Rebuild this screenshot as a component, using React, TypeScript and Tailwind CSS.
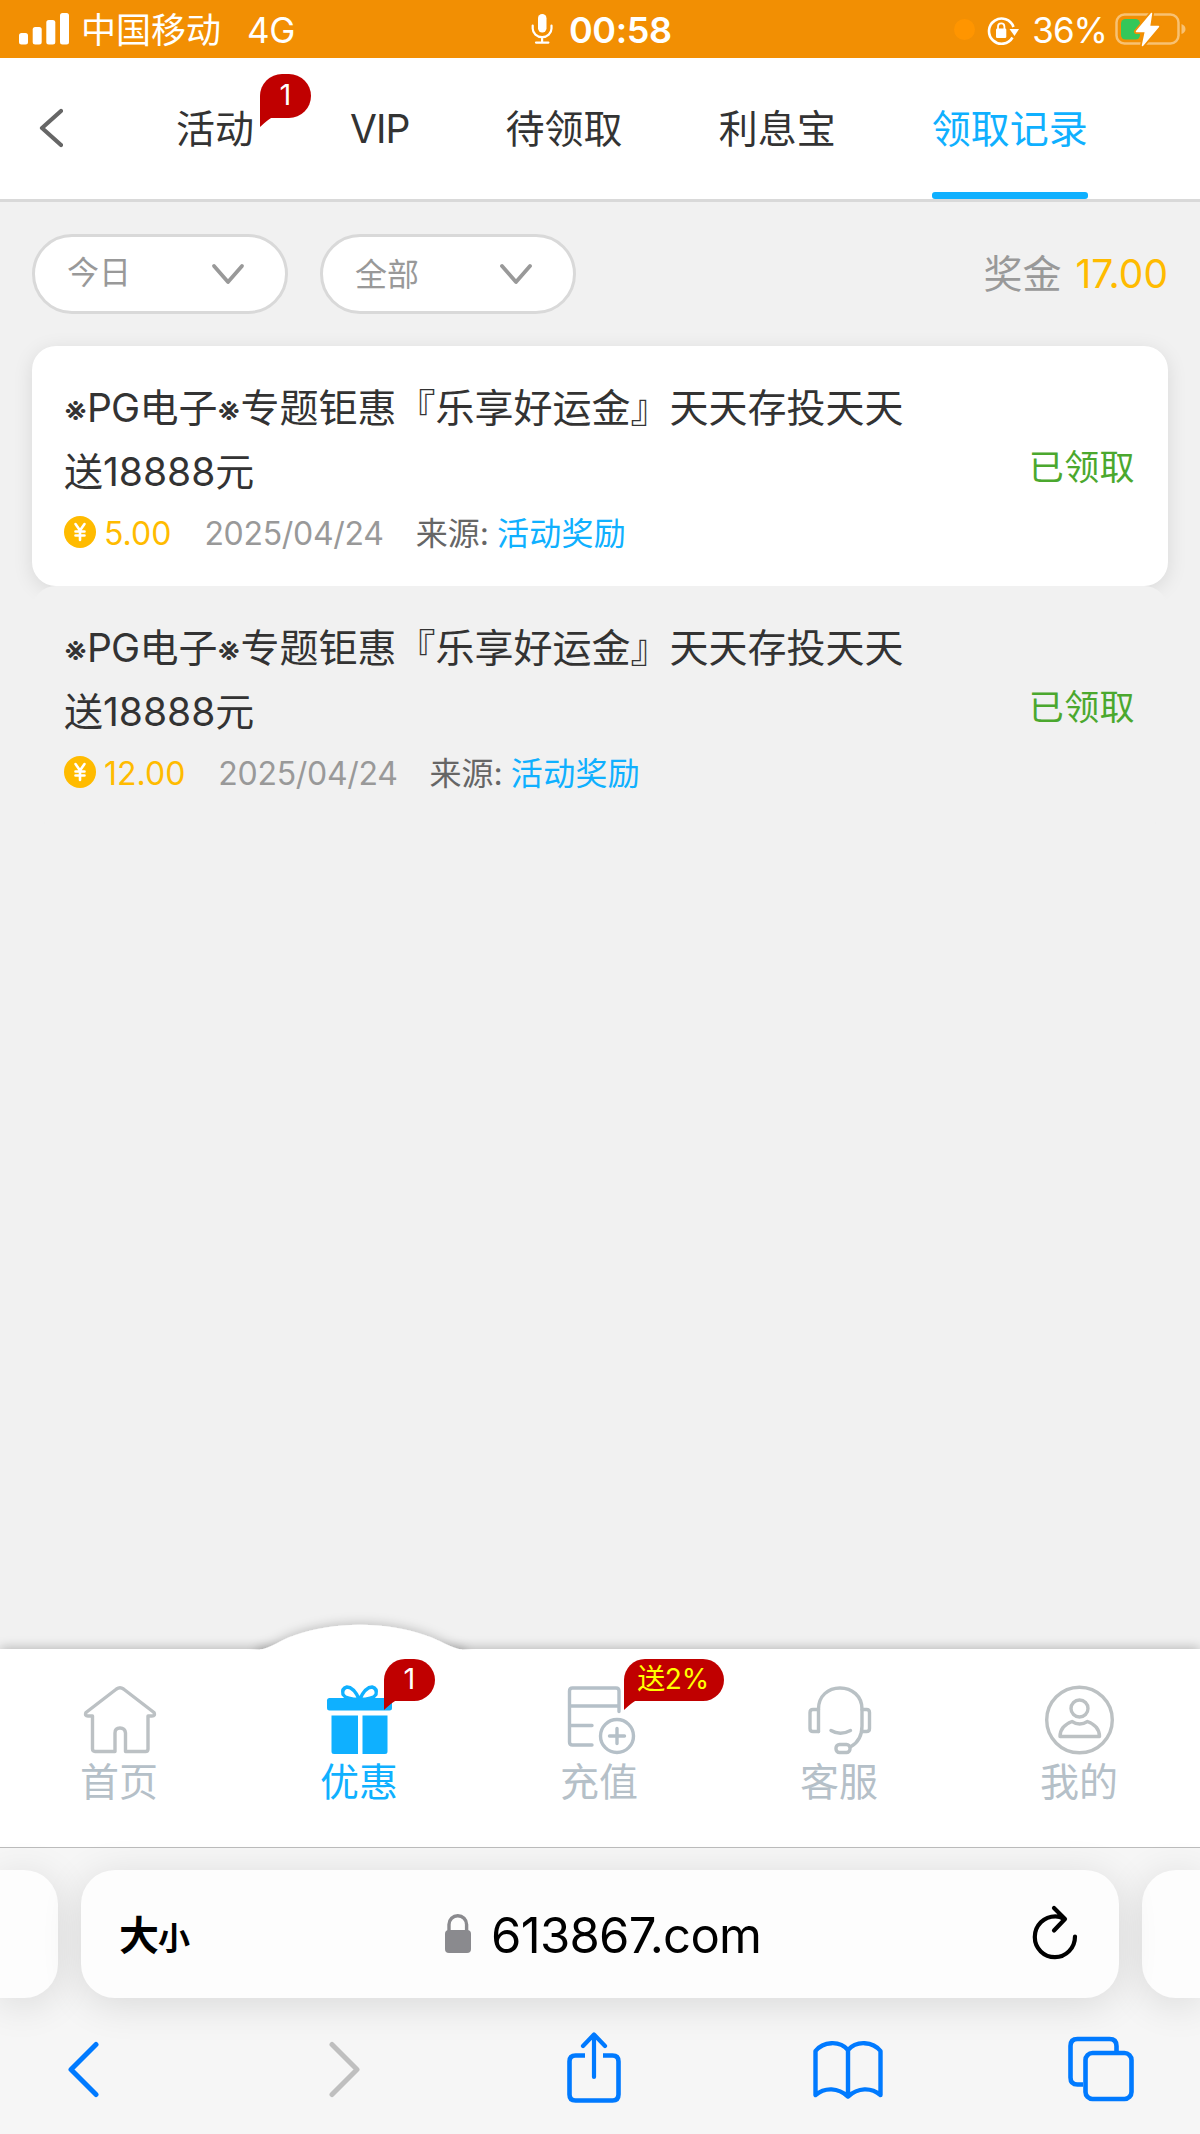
import type { ReactNode } from "react";

const tabs = [
  { label: "活动", badge: "1" },
  { label: "VIP" },
  { label: "待领取" },
  { label: "利息宝" },
  { label: "领取记录", active: true },
];

const filters = [
  { label: "今日", offset: "pb-0.5" },
  { label: "全部", offset: "pt-0.5" },
];

const records = [
  { id: 1, amount: "5.00", date: "2025/04/24", source: "活动奖励", status: "已领取" },
  { id: 2, amount: "12.00", date: "2025/04/24", source: "活动奖励", status: "已领取" },
];

function Badge({ children, className }: { children: ReactNode; className: string }) {
  return (
    <span
      className={`absolute flex items-center justify-center rounded-[22px] rounded-bl-none bg-[#c00000] leading-none ${className}`}
    >
      {children}
      <svg className="absolute left-0 top-full -mt-px" width="13" height="10" viewBox="0 0 13 10">
        <path d="M0 0H13Q9 1.5 0 10Z" fill="#c00000" />
      </svg>
    </span>
  );
}

function StatusBar() {
  return (
    <div className="relative flex h-[58px] items-center justify-between bg-[#f28f03] pl-[19px] pr-[14px] text-[35px] leading-none text-white">
      <div className="flex items-center">
        <svg width="50" height="32" viewBox="0 0 50 32" fill="#fff">
          <rect x="0" y="20" width="9" height="11.5" rx="2.5" />
          <rect x="13.7" y="14" width="9" height="17.5" rx="2.5" />
          <rect x="27.3" y="7" width="9" height="24.5" rx="2.5" />
          <rect x="41" y="0" width="9" height="31.5" rx="2.5" />
        </svg>
        <span className="ml-3 mt-0.5">中国移动</span>
        <span className="ml-[26px] mt-0.5 tracking-[-0.5px]">4G</span>
      </div>

      <div className="absolute left-[531px] top-0 flex h-[58px] items-center">
        <svg width="22" height="32" viewBox="0 0 22 32" fill="none" stroke="#fff" strokeWidth="2.2" strokeLinecap="round">
          <rect x="7" y="1" width="8.5" height="18.5" rx="4.2" fill="#fff" stroke="none" />
          <path d="M1.7 12.5V15.5a9.4 8.6 0 0 0 18.8 0V12.5M11.1 24V29M5 29.6H17.4" />
        </svg>
        <span className="ml-4 mt-0.5 text-[36px] font-semibold tracking-[-0.4px]">00:58</span>
      </div>

      <div className="flex items-center">
        <span className="mr-3 size-[21px] rounded-full bg-[#ff9500]" />
        <svg className="mt-1" width="32" height="30" viewBox="0 0 32 30" fill="none" stroke="#fff" strokeWidth="2.6">
          <path d="M25.5 21.5A12.6 12.6 0 1 1 26.5 11" />
          <path d="M22.5 13H32L27.500 20Z" fill="#fff" stroke="none" />
          <path d="M11 13V10.5a3.200 3.200 0 0 1 6.400 0V13" strokeWidth="1.8" />
          <rect x="9" y="12.5" width="10.3" height="9.500" rx="1.2" fill="#fff" stroke="none" />
        </svg>
        <span className="ml-[13px] mt-0.5 tracking-[-1px]">36%</span>
        <svg className="ml-2" width="71" height="36" viewBox="0 0 71 36">
          <rect x="1.5" y="3.5" width="62" height="29" rx="8" fill="none" stroke="#f8c172" strokeWidth="2.5" />
          <path d="M66.5 13q4 1.5 4 5t-4 5Z" fill="#f8c172" />
          <rect x="6" y="8" width="19" height="20.5" rx="4.5" fill="#34c759" />
          <path d="M36.5 2.5L21.5 20.5H30.5L27.5 34.5L43.5 15.5H34.5Z" fill="#fff" stroke="#f28f03" strokeWidth="5" strokeLinejoin="round" />
          <path d="M36.5 2.5L21.5 20.5H30.5L27.5 34.5L43.5 15.5H34.5Z" fill="#fff" stroke="#fff" strokeWidth="1.5" strokeLinejoin="round" />
        </svg>
      </div>
    </div>
  );
}

function TopTabs() {
  return (
    <nav className="flex h-[144px] items-stretch border-b-[3px] border-[#d9d9d9] bg-white pl-[38px]">
      <svg className="mt-[50px]" width="25" height="40" viewBox="0 0 25 40" fill="none" stroke="#666" strokeWidth="4.2" strokeLinecap="round" strokeLinejoin="round">
        <path d="M23 3L4 20L23 37" />
      </svg>
      <div className="ml-[113px] flex gap-[96px] text-[39px] leading-[141px]">
        {tabs.map((tab) => (
          <div
            key={tab.label}
            className={`relative whitespace-nowrap ${tab.active ? "text-[#0fb0ff]" : "text-[#333]"} ${
              tab.label === "VIP" ? "tracking-[-0.9px]" : ""
            }`}
          >
            {tab.label}
            {tab.badge && <Badge className="left-[84px] top-4 h-11 w-[51px] pb-1 text-[29px] text-white">{tab.badge}</Badge>}
            {tab.active && <span className="absolute inset-x-0 bottom-0 h-[7px] rounded-[3px] bg-[#0fb0ff]" />}
          </div>
        ))}
      </div>
    </nav>
  );
}

function FilterBar() {
  return (
    <div className="flex h-[144px] items-center gap-8 px-8">
      {filters.map((filter) => (
        <button
          key={filter.label}
          className="flex h-20 w-64 items-center justify-between rounded-full border-[3px] border-[#d9d9d9] bg-white pl-8 pr-10 text-[32px] leading-none text-[#999]"
        >
          <span className={filter.offset}>{filter.label}</span>
          <svg width="34" height="22" viewBox="0 0 34 22" fill="none" stroke="#999" strokeWidth="3.8" strokeLinecap="round" strokeLinejoin="round">
            <path d="M3 3L17 19L31 3" />
          </svg>
        </button>
      ))}
      <div className="ml-auto pb-0.5 text-[39px] leading-none text-[#999]">
        奖金<span className="ml-[14px] text-[#ffbb00]">17.00</span>
      </div>
    </div>
  );
}

function Star() {
  return (
    <span className="inline-flex w-[23px] justify-center text-[34px] font-medium leading-none">
      <span className="shrink-0">※</span>
    </span>
  );
}

function CoinIcon() {
  return (
    <svg className="-mt-1" width="32" height="32" viewBox="0 0 32 32">
      <circle cx="16" cy="16" r="16" fill="#ffbb00" />
      <path d="M11.5 8L16 14.5L20.5 8M16 14.5V24M11.5 15.500H20.500M11.500 19.500H20.500" fill="none" stroke="#fff" strokeWidth="2.6" strokeLinecap="round" />
    </svg>
  );
}

function RecordList() {
  return (
    <ul>
      {records.map((record, index) => (
        <li
          key={record.id}
          className={`relative mx-8 flex h-60 items-center justify-between rounded-[24px] px-8 ${
            index % 2 === 0 ? "bg-white shadow-[0_4px_20px_rgba(0,0,0,0.1)]" : "bg-[#f1f1f1]"
          }`}
        >
          <div className="pt-2">
            <p className="w-[870px] text-[39px] leading-[64px] text-[#333]">
              <Star />
              <span className="tracking-[-0.8px]">PG</span>电子
              <Star />
              专题钜惠『乐享好运金』天天存投天天
              <br />
              送18888元
            </p>
            <div className="flex h-[60px] items-center text-[32px] leading-none">
              <CoinIcon />
              <span className="ml-2 text-[#ffbb00]">{record.amount}</span>
              <span className="ml-[33px] tracking-[-0.3px] text-[#999]">{record.date}</span>
              <span className="ml-8 text-[#666]">来源:</span>
              <span className="ml-2 tracking-[0.3px] text-[#0fb0ff]">{record.source}</span>
            </div>
          </div>
          <span className="mr-px whitespace-nowrap pt-0.5 text-[35px] tracking-[0.4px] text-[#4ba82e]">{record.status}</span>
        </li>
      ))}
    </ul>
  );
}

function HomeIcon() {
  return (
    <svg width="74" height="70" viewBox="0 0 74 70" fill="none" stroke="#bcc1c4" strokeWidth="3.4" strokeLinejoin="round">
      <path d="M33.5 4Q37 1.5 40.5 4L71 27.5Q72.5 31 69 31H65V64Q65 66.5 62.5 66.5H42.5V48Q42 43 37 43T32 48V66.5H12Q9.5 66.5 9.5 64V31H5Q1.5 31 3 27.5Z" />
    </svg>
  );
}

function GiftIcon() {
  return (
    <svg width="74" height="70" viewBox="0 0 74 70" fill="#0fb0ff">
      <path
        d="M36.5 14.5Q30.500 2 24 2Q18.500 3.500 20 9.500Q22.500 14 36.500 14.500Q50.500 14 53 9.500Q54.500 3.500 49 2Q42.500 2 36.500 14.500"
        fill="none"
        stroke="#0fb0ff"
        strokeWidth="3.4"
      />
      <rect x="4" y="13" width="65" height="12.5" rx="2.5" />
      <path d="M8.500 30.5H35V69H11Q8.500 69 8.500 66.5ZM39.500 30.5H64.500V66.5Q64.500 69 62 69H39.500Z" />
    </svg>
  );
}

function RechargeIcon() {
  return (
    <svg width="74" height="70" viewBox="0 0 74 70" fill="none" stroke="#b5c0c8" strokeWidth="3.4" strokeLinecap="round" strokeLinejoin="round">
      <path d="M56 26.5V6Q56 3 53 3H9.5Q6.5 3 6.5 6V57Q6.5 60 9.5 60H29M6.5 21H56M6.5 40.5H29" />
      <circle cx="54" cy="51" r="16.5" />
      <path d="M46.5 51H61.5M54 43.5V58.5" />
    </svg>
  );
}

function ServiceIcon() {
  return (
    <svg width="74" height="70" viewBox="0 0 74 70" fill="none" stroke="#b9c1c5" strokeWidth="3.4" strokeLinecap="round" strokeLinejoin="round">
      <path d="M15.5 46.5V24C15.5 11 25 3 37 3S59 11 59 24V41C59 51 55 57.5 48 61.5" />
      <path d="M15.5 24.5H10Q7 24.5 7 27.5V43.5Q7 46.5 10 46.5H15.5M59 24.5H63.5Q66.5 24.5 66.5 27.5V43.5Q66.5 46.5 63.5 46.5H58.5" />
      <path d="M28 45.5Q37 51 47.5 45.5" />
      <rect x="33" y="59.5" width="14" height="8" rx="3.5" />
    </svg>
  );
}

function MineIcon() {
  return (
    <svg width="74" height="70" viewBox="0 0 74 70" fill="none" stroke="#bcc1c3" strokeWidth="3.4" strokeLinejoin="round">
      <circle cx="36.5" cy="35" r="32.8" />
      <circle cx="36.5" cy="23.5" r="8.5" />
      <path d="M29 36.5Q17 41 17 51.5H56.5Q56.5 41 44.5 36.5Q36.5 41.5 29 36.5Z" />
    </svg>
  );
}

const menu = [
  { label: "首页", icon: <HomeIcon /> },
  { label: "优惠", icon: <GiftIcon />, badge: "1", active: true },
  { label: "充值", icon: <RechargeIcon />, badge: "送2%" },
  { label: "客服", icon: <ServiceIcon /> },
  { label: "我的", icon: <MineIcon /> },
];

function BottomMenu() {
  return (
    <div className="relative flex h-[198px] bg-white shadow-[0_-2px_10px_rgba(0,0,0,0.22)]">
      {/* raised bump behind the active item */}
      <svg className="absolute left-[230px] top-[-44px]" width="260" height="60" viewBox="0 0 260 60">
        <defs>
          <filter id="bump" x="-10%" y="-50%" width="120%" height="200%">
            <feDropShadow dx="0" dy="-3" stdDeviation="5" floodColor="#000" floodOpacity="0.17" />
          </filter>
          <clipPath id="above">
            <rect width="260" height="45" />
          </clipPath>
        </defs>
        <g clipPath="url(#above)">
          <path d="M26 46C44 42 50 35 64 30.500C104 16 156 16 196 30.500C210 35 218 42 236 46V60H26Z" fill="#fff" filter="url(#bump)" />
        </g>
      </svg>
      {menu.map((item) => (
        <div
          key={item.label}
          className={`relative flex w-60 flex-col items-center pt-9 text-[39px] leading-none ${
            item.active ? "text-[#0fb0ff]" : "text-[#b5c0c8]"
          }`}
        >
          {item.icon}
          <span className="mr-0.5 mt-[7px]">{item.label}</span>
          {item.badge && (
            <Badge
              className={
                item.active
                  ? "left-36 top-2.5 h-[42px] w-[51px] pb-[3px] text-[29px] text-white"
                  : "left-36 top-2.5 h-[42px] w-[100px] pb-0.5 pr-0.5 text-[28px] tracking-[-0.3px] text-[#ff0]"
              }
            >
              {item.badge}
            </Badge>
          )}
        </div>
      ))}
    </div>
  );
}

function BrowserBar() {
  return (
    <div className="relative h-[287px] border-t border-[#bcbcbc] bg-[#f6f6f6] pt-[22px]">
      <div className="flex h-32 gap-[23px]">
        <div className="w-[58px] rounded-r-[34px] bg-[#fdfdfd] shadow-[0_6px_40px_rgba(0,0,0,0.12)]" />
        <div className="relative flex w-[1038px] items-center justify-between rounded-[34px] bg-[#fdfdfd] pl-[38px] pr-[40px] text-black shadow-[0_6px_40px_rgba(0,0,0,0.12)]">
          <div className="flex items-baseline pt-1 font-bold leading-none">
            <span className="text-[40px]">大</span>
            <span className="-ml-px text-[32px]">小</span>
          </div>
          <div className="absolute inset-y-0 left-[363px] flex items-center">
            <svg width="28" height="40" viewBox="0 0 28 40">
              <path d="M5 18V10.5a8.8 8.8 0 0 1 17.6 0V18" fill="none" stroke="#8a8a8e" strokeWidth="3.4" />
              <rect x="1" y="16" width="26" height="23" rx="4" fill="#8a8a8e" />
            </svg>
            <span className="ml-[19px] mt-0.5 text-[49px] leading-none tracking-[-0.7px]">613867.com</span>
          </div>
          <svg className="-mt-1" width="48" height="56" viewBox="0 0 48 56" fill="none" stroke="#000" strokeWidth="4.2" strokeLinecap="round" strokeLinejoin="round">
            <path d="M33 15C29 12.5 27 12.3 24.5 12.3C13 12.3 3.8 21.5 3.8 33S13 53.2 24 53.2S44 44 44 32.5M23 4L34 15L23 26.5" />
          </svg>
        </div>
        <div className="w-[58px] rounded-l-[34px] bg-[#fdfdfd] shadow-[0_6px_40px_rgba(0,0,0,0.12)]" />
      </div>

      <div className="relative mt-[33px] flex h-[76px] items-center pl-[66px] text-[#007aff]">
        <svg width="34" height="58" viewBox="0 0 34 58" fill="none" stroke="currentColor" strokeWidth="5" strokeLinecap="round" strokeLinejoin="round">
          <path d="M30 4.5L5 29.500L30 54.500" />
        </svg>
        <svg className="ml-[228px]" width="34" height="58" viewBox="0 0 34 58" fill="none" stroke="#bfbfbf" strokeWidth="5" strokeLinecap="round" strokeLinejoin="round">
          <path d="M4 4.5L29 29.500L4 54.500" />
        </svg>
        <svg className="-mt-1 ml-[204px]" width="56" height="74" viewBox="0 0 56 74" fill="none" stroke="currentColor" strokeWidth="4.6" strokeLinejoin="round">
          <path d="M19 25.5H9.5Q3.5 25.5 3.5 31.5V64.5Q3.5 70.5 9.5 70.5H46.5Q52.5 70.5 52.5 64.5V31.5Q52.5 25.5 46.5 25.5H37" />
          <path d="M28 47V5M17 16L28 4.5L39 16" strokeLinecap="round" strokeWidth="4.2" />
        </svg>
        <svg className="ml-[190px]" width="72" height="60" viewBox="0 0 72 60" fill="none" stroke="currentColor" strokeWidth="4.4" strokeLinejoin="round">
          <path d="M3.5 56V12C11 2.5 27.5 1 36 11C44.5 1 61 2.5 68.5 12V56C59 48 46 48.5 36 57.5C26 48.5 13 48 3.5 56ZM36 11V57" />
        </svg>
        <svg className="ml-[183px]" width="68" height="66" viewBox="0 0 68 66" fill="none" stroke="currentColor" strokeWidth="4.6">
          <path d="M16 48.5H10.5Q3.5 48.5 3.5 41.5V10Q3.5 3 10.5 3H42.5Q49.5 3 49.5 10V16" />
          <rect x="18.5" y="17" width="46" height="46" rx="7" />
        </svg>
      </div>
    </div>
  );
}

export default function App() {
  return (
    <div className="flex h-[2134px] w-[1200px] flex-col overflow-hidden bg-[#f1f1f1] font-['Inter','Noto_Sans_CJK_SC',sans-serif] font-normal">
      <StatusBar />
      <TopTabs />
      <main className="flex-1">
        <FilterBar />
        <RecordList />
      </main>
      <BottomMenu />
      <BrowserBar />
    </div>
  );
}
